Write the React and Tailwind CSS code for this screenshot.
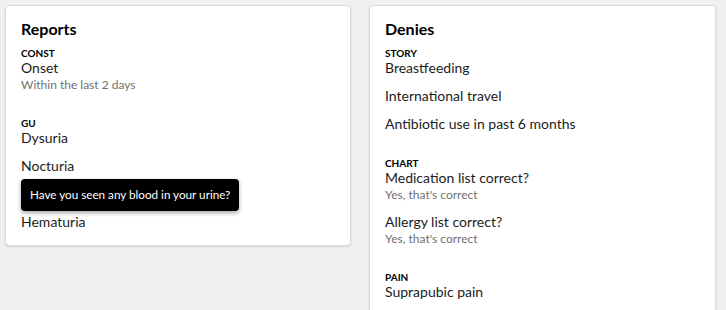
import React from 'react'

const Label = ({ children }) => (
    <p className="text-[10px] leading-[12px] font-bold uppercase text-black">{children}</p>
)

const Item = ({ title, sub, first, children }) => (
    <div className={`relative ${first ? '' : 'mt-[10px]'}`}>
        {title ? (
            <p className="text-[14px] leading-[18px] text-[#1c1c1c]">{title}</p>
        ) : (
            <div className="h-[18px]" />
        )}
        {sub && <p className="text-[12px] leading-[16px] text-[#707070]">{sub}</p>}
        {children}
    </div>
)

const Section = ({ label, items, first }) => (
    <div className={first ? '' : 'mt-6'}>
        <Label>{label}</Label>
        {items}
    </div>
)

const Card = ({ title, width, children }) => (
    <div className={`${width} bg-white border border-[#dadbdd] rounded-[4px] shadow-[0_1px_2px_rgba(0,0,0,0.12)] pl-[15px] pr-4 pt-[13px] pb-[14px]`}>
        <h2 className="text-[16px] leading-[20px] font-bold text-black mb-[8px]">{title}</h2>
        {children}
    </div>
)

export default function App() {
    return (
        <div
            className="min-h-[310px] bg-[#eff0f2] pl-[5px] pt-[5px] flex items-start gap-[18px]"
            style={{ fontFamily: 'Lato, "Noto Sans", sans-serif' }}
        >
            <Card title="Reports" width="w-[346px]">
                <Section first label="CONST" items={
                    <Item first title="Onset" sub="Within the last 2 days" />
                } />
                <Section label="GU" items={
                    <>
                        <Item first title="Dysuria" />
                        <Item title="Nocturia" />
                        {/* hovered row, hidden under its tooltip */}
                        <Item>
                            <div className="absolute left-0 -top-[6px] h-8 w-[218px] bg-black rounded-[4px] shadow-[0_2px_4px_rgba(0,0,0,0.35)] flex items-center px-[9px]">
                                <span className="text-[11.7px] text-white whitespace-nowrap">Have you seen any blood in your urine?</span>
                            </div>
                        </Item>
                        <Item title="Hematuria" />
                    </>
                } />
            </Card>

            <Card title="Denies" width="w-[347px]">
                <Section first label="STORY" items={
                    <>
                        <Item first title="Breastfeeding" />
                        <Item title="International travel" />
                        <Item title="Antibiotic use in past 6 months" />
                    </>
                } />
                <Section label="CHART" items={
                    <>
                        <Item first title="Medication list correct?" sub="Yes, that's correct" />
                        <Item title="Allergy list correct?" sub="Yes, that's correct" />
                    </>
                } />
                <Section label="PAIN" items={
                    <Item first title="Suprapubic pain" />
                } />
            </Card>
        </div>
    )
}
